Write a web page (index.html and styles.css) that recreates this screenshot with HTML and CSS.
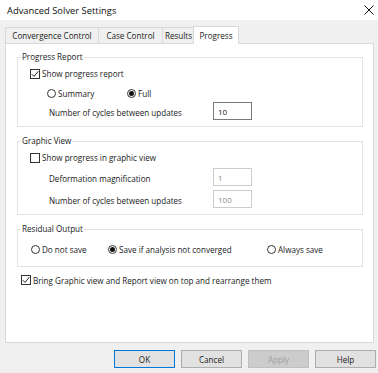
FILE: index.html
```html
<!DOCTYPE html>
<html>
<head>
<meta charset="utf-8">
<link rel="stylesheet" href="styles.css">
</head>
<body>
<div class="dialog">
  <div class="titlebar">
    <span class="title">Advanced Solver Settings</span>
    <svg class="close" width="10" height="10" viewBox="0 0 10 10"><path d="M0.5 0.5L9.5 9.5M9.5 0.5L0.5 9.5" stroke="#111" stroke-width="1"/></svg>
  </div>
  <div class="tabs">
    <div class="tab t1">Convergence Control</div>
    <div class="tab t2">Case Control</div>
    <div class="tab t3">Results</div>
    <div class="tab active">Progress</div>
  </div>
  <div class="panel">
    <fieldset class="group g1">
      <legend>Progress Report</legend>
      <div class="row r-check">
        <span class="cb checked"><svg width="8" height="8" viewBox="0 0 8 8"><path d="M0.8 4.2L3 6.4L7.3 1.2" fill="none" stroke="#222" stroke-width="1"/></svg></span>
        <span>Show progress report</span>
      </div>
      <div class="row r-radio">
        <label class="radio-item summary"><span class="rb"></span>Summary</label>
        <label class="radio-item full"><span class="rb on"></span>Full</label>
      </div>
      <div class="row r-field">
        <span class="flabel">Number of cycles between updates</span>
        <span class="input">10</span>
      </div>
    </fieldset>

    <fieldset class="group g2">
      <legend>Graphic View</legend>
      <div class="row r-check">
        <span class="cb"></span>
        <span>Show progress in graphic view</span>
      </div>
      <div class="row r-field">
        <span class="flabel">Deformation magnification</span>
        <span class="input disabled">1</span>
      </div>
      <div class="row r-field second">
        <span class="flabel">Number of cycles between updates</span>
        <span class="input disabled">100</span>
      </div>
    </fieldset>

    <fieldset class="group g3">
      <legend>Residual Output</legend>
      <div class="row r-res">
        <label class="radio-item dns"><span class="rb"></span>Do not save</label>
        <label class="radio-item sia"><span class="rb on"></span>Save if analysis not converged</label>
        <label class="radio-item als"><span class="rb"></span>Always save</label>
      </div>
    </fieldset>

    <div class="row r-bring">
      <span class="cb checked"><svg width="8" height="8" viewBox="0 0 8 8"><path d="M0.8 4.2L3 6.4L7.3 1.2" fill="none" stroke="#222" stroke-width="1"/></svg></span>
      <span>Bring Graphic view and Report view on top and rearrange them</span>
    </div>
  </div>
  <div class="buttons">
    <button class="btn default">OK</button>
    <button class="btn">Cancel</button>
    <button class="btn disabled">Apply</button>
    <button class="btn">Help</button>
  </div>
</div>
</body>
</html>
```

FILE: styles.css
```css
* { box-sizing: border-box; }
html, body { margin: 0; padding: 0; }
body {
  width: 378px;
  height: 373px;
  background: #f0f0f0;
  font-family: "Open Sans", "Noto Sans", sans-serif;
  font-size: 8.1px;
  color: #1a1a1a;
  overflow: hidden;
}
.dialog { width: 378px; height: 373px; display: flex; flex-direction: column; }
.titlebar {
  height: 20px;
  background: #fff;
  display: flex;
  align-items: center;
  justify-content: space-between;
  padding: 0 4px 0 7px;
}
.title { font-size: 9.4px; color: #111; }
.close { margin-right: 0; }

.tabs {
  display: flex;
  align-items: flex-end;
  height: 23px;
  padding-left: 5px;
}
.tab {
  height: 16px;
  border: 1px solid #d9d9d9;
  border-bottom: none;
  border-right: none;
  background: #f0f0f0;
  display: flex;
  align-items: center;
  justify-content: center;
  color: #1a1a1a;
}
.t1 { width: 93px; }
.t2 { width: 64px; }
.t3 { width: 32px; }
.tab.active {
  width: 46px;
  height: 18px;
  background: #fff;
  border-right: 1px solid #d9d9d9;
  margin-left: -1px;
  position: relative;
  z-index: 1;
  margin-bottom: -1px;
  padding-bottom: 1px;
}

.panel {
  margin-left: 5px;
  width: 369px;
  height: 300px;
  background: #fff;
  border: 1px solid #d9d9d9;
  padding: 0 10px 0 11px;
}

.group {
  margin: 0;
  padding: 0;
  border: 1px solid #e3e3e3;
  width: 346px;
  min-width: 0;
}
.group legend {
  margin-left: 3px;
  padding: 0 1px;
  line-height: 12px;
  color: #1a1a1a;
}
.g1 { margin-top: 7px; padding-bottom: 6px; }
.g2 { margin-top: 8px; padding-bottom: 6px; }
.g3 { margin-top: 8px; padding-bottom: 6px; }

.row { display: flex; align-items: center; }
.r-check { height: 21px; padding-left: 12px; }
.r-radio { height: 18px; padding-left: 29px; }
.r-field { height: 18px; padding-left: 31px; }
.r-field.second { margin-top: 4px; }
.r-res { height: 22px; margin-top: 3px; padding-left: 13px; }
.r-bring { height: 18px; margin-top: 4px; padding-left: 4px; }

.cb {
  width: 10px; height: 10px;
  border: 1px solid #333;
  background: #fff;
  margin-right: 2px;
  display: flex; align-items: center; justify-content: center;
  flex: none;
}
.rb {
  width: 9px; height: 9px;
  border: 1px solid #333;
  border-radius: 50%;
  background: #fff;
  margin-right: 2px;
  flex: none;
  display: flex; align-items: center; justify-content: center;
}
.rb.on::after {
  content: "";
  width: 5px; height: 5px;
  border-radius: 50%;
  background: #111;
}
.radio-item { display: flex; align-items: center; }
.summary { width: 80px; }
.dns { width: 77px; }
.sia { width: 159px; }

.flabel { width: 150px; flex: none; padding-top: 2px; }
.r-field .flabel { width: 164px; }
.input {
  width: 39px; height: 18px;
  border: 1px solid #7a7a7a;
  background: #fff;
  display: flex; align-items: center;
  padding-left: 4px;
  font-size: 8px;
  color: #111;
}
.input.disabled { border-color: #cccccc; color: #8a8a8a; }

.buttons {
  display: flex;
  justify-content: flex-end;
  gap: 6px;
  padding: 7px 2px 0 0;
}
.btn {
  width: 61px; height: 18px;
  border: 1px solid #adadad;
  background: #e1e1e1;
  font-family: inherit;
  font-size: 8.1px;
  color: #1a1a1a;
  padding: 0;
}
.btn.default { border-color: #0078d7; }
.btn.disabled { background: #cccccc; border-color: #bfbfbf; color: #a0a0a0; }
```
